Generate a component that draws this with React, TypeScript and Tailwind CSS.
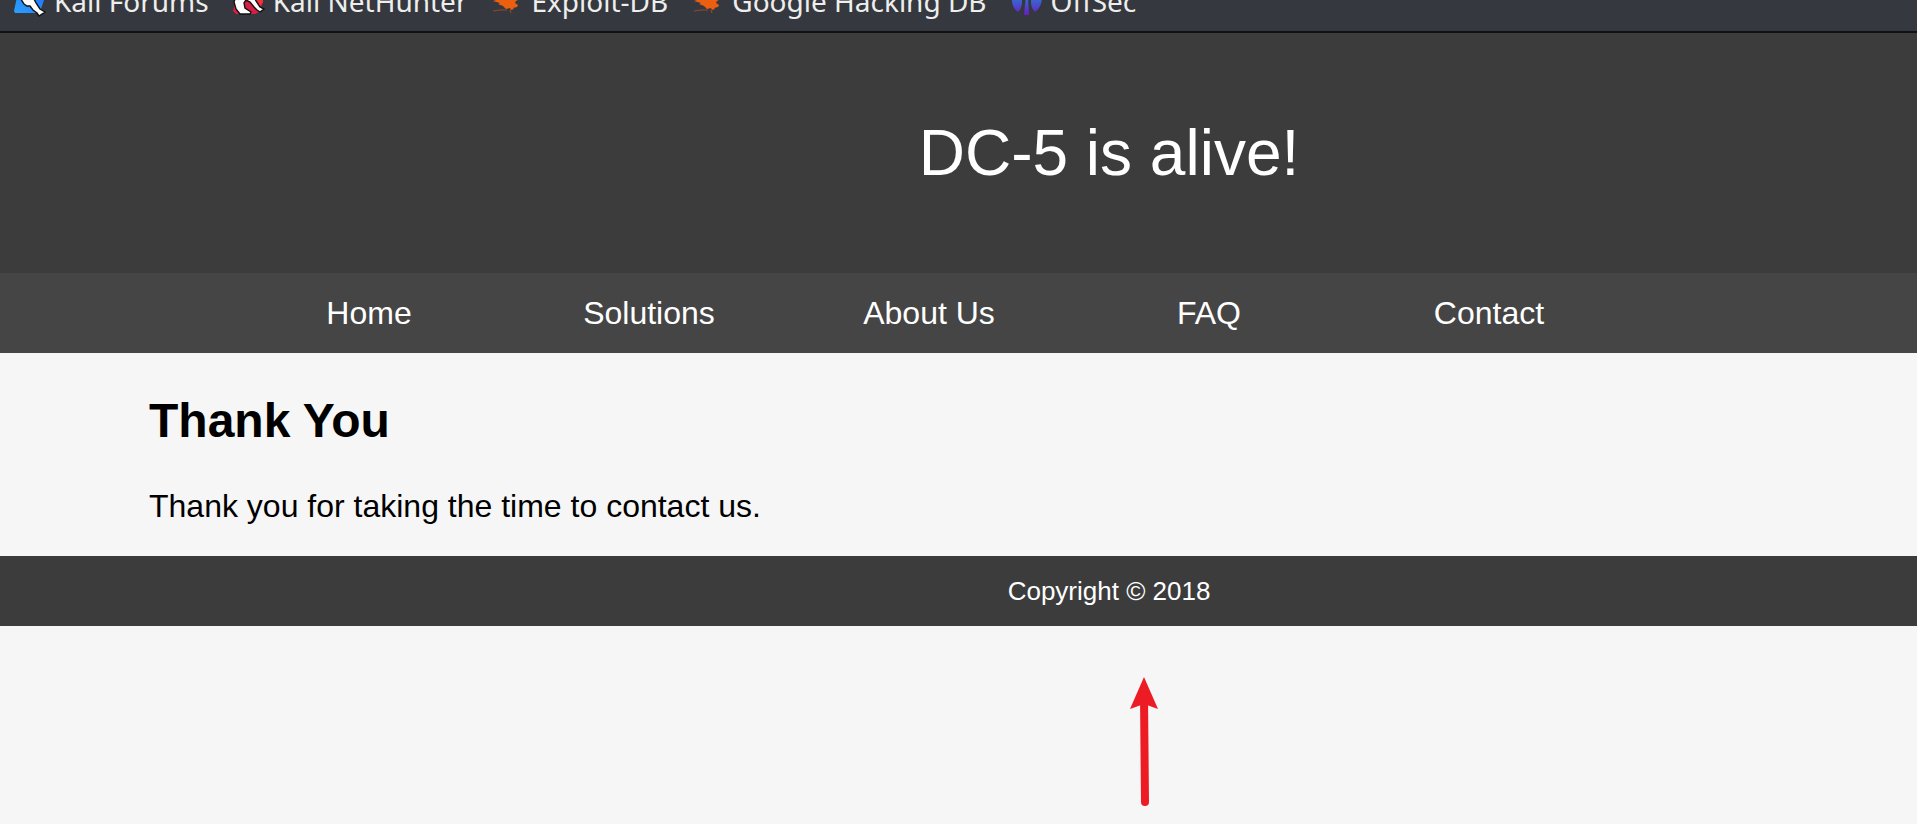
import type { ReactNode } from 'react';

const KaliIcon = () => (
  <svg viewBox="0 0 32 32" className="size-8 shrink-0 overflow-visible" aria-hidden="true">
    <defs>
      <linearGradient id="kali" x1="0" y1="1" x2="1" y2="0">
        <stop offset="0" stopColor="#2aa0ff" />
        <stop offset="1" stopColor="#1f6df5" />
      </linearGradient>
    </defs>
    <path d="M5 1H31L30 17L27 26L26 30H1L0 28L3 14Z" fill="url(#kali)" />
    <path
      d="M4 10L8 18L10 21L13 23L16 23L19 27L23 30L25 33L31 29L26 26L22 20L20 16L16 10Z"
      fill="#fff"
      stroke="#111"
      strokeWidth="1.4"
    />
  </svg>
);

const NetHunterIcon = () => (
  <svg viewBox="0 0 32 32" className="size-8 shrink-0 overflow-visible" aria-hidden="true">
    <path d="M1 8L6 2H30V19L26 29L22 31H3L0 28L1 24Z" fill="#d81e45" />
    <path d="M22 10H30V19L27 24L22 19Z" fill="#f5303a" />
    <path
      d="M4 10L1 19L3 26L7 31L17 31L18 29L12 25L11 20L13 17L17 19L21 24L24 27L27 29L31 26L27 24L23 18L19 10Z"
      fill="#fff"
      stroke="#111"
      strokeWidth="1.4"
    />
  </svg>
);

const ExploitIcon = () => (
  <svg viewBox="0 0 32 32" className="size-8 shrink-0 overflow-visible" aria-hidden="true">
    <path
      d="M1 14L5 17L2 18L9 20L7 21L12 23L15 26L19 25L20 27L23 26L22 25L26 24L27 22L24 20L25 18L29 16L23 15L20 10H8Z"
      fill="#ec5e10"
    />
    <path d="M2 28L9 27L16 27M19 27L20 30" stroke="#8f4a2a" strokeWidth="1.2" fill="none" />
  </svg>
);

const OffSecIcon = () => (
  <svg viewBox="0 0 32 32" className="size-8 shrink-0 overflow-visible" aria-hidden="true">
    <defs>
      <linearGradient id="offsec" x1="0" y1="14" x2="0" y2="32" gradientUnits="userSpaceOnUse">
        <stop offset="0" stopColor="#2e74d0" />
        <stop offset="1" stopColor="#6a1cc4" />
      </linearGradient>
    </defs>
    <path
      d="M1 14Q0 24 7 29Q11 26 11 19V12H2ZM15 12L13 32H18L17 12ZM20 12V19Q20 25 24 29Q31 24 31 14L30 12Z"
      fill="url(#offsec)"
    />
  </svg>
);

const bookmarks: { label: string; icon: ReactNode }[] = [
  { label: 'Kali Forums', icon: <KaliIcon /> },
  { label: 'Kali NetHunter', icon: <NetHunterIcon /> },
  { label: 'Exploit-DB', icon: <ExploitIcon /> },
  { label: 'Google Hacking DB', icon: <ExploitIcon /> },
  { label: 'OffSec', icon: <OffSecIcon /> },
];

const links = ['Home', 'Solutions', 'About Us', 'FAQ', 'Contact'];

export default function App() {
  return (
    <div className="relative min-h-screen overflow-hidden bg-[#f6f6f6] font-['Liberation_Sans',Arial,sans-serif] text-black">
      <div className="flex h-[33px] items-end gap-6 overflow-hidden border-b-2 border-[#101114] bg-[#35383f] pb-4 pl-[14px] font-['Noto_Sans',sans-serif] text-[28px] leading-7 text-[#eeeeec]">
        {bookmarks.map((b) => (
          <a key={b.label} href="#" className="flex shrink-0 items-end gap-2 whitespace-nowrap">
            {b.icon}
            <span>{b.label}</span>
          </a>
        ))}
      </div>
      <header className="flex h-60 items-center justify-center bg-[#3c3c3c] pl-[301px]">
        <p className="text-[64px] leading-[72px] text-white">DC-5 is alive!</p>
      </header>
      <nav className="bg-[#454545] pl-[229px]">
        <ul className="flex">
          {links.map((l) => (
            <li key={l} className="w-[280px]">
              <a href="#" className="block text-center text-[32px] leading-[80px] text-white">
                {l}
              </a>
            </li>
          ))}
        </ul>
      </nav>
      <main className="px-[149px] pt-10 pb-8">
        <h1 className="text-5xl leading-[56px] font-bold">Thank You</h1>
        <p className="mt-[39px] text-[32px] leading-9">Thank you for taking the time to contact us.</p>
      </main>
      <footer className="bg-[#3c3c3c] pl-[301px] text-center text-[26px] leading-[70px] text-white">
        Copyright © 2018
      </footer>
      <svg
        viewBox="0 0 30 130"
        className="absolute top-[677px] left-[1129px] h-[130px] w-[30px]"
        aria-hidden="true"
      >
        <path d="M15 20L16 125" stroke="#ed1c24" strokeWidth="8" strokeLinecap="round" />
        <path d="M15 0L29 32L15 27L1 32Z" fill="#ed1c24" />
      </svg>
    </div>
  );
}
